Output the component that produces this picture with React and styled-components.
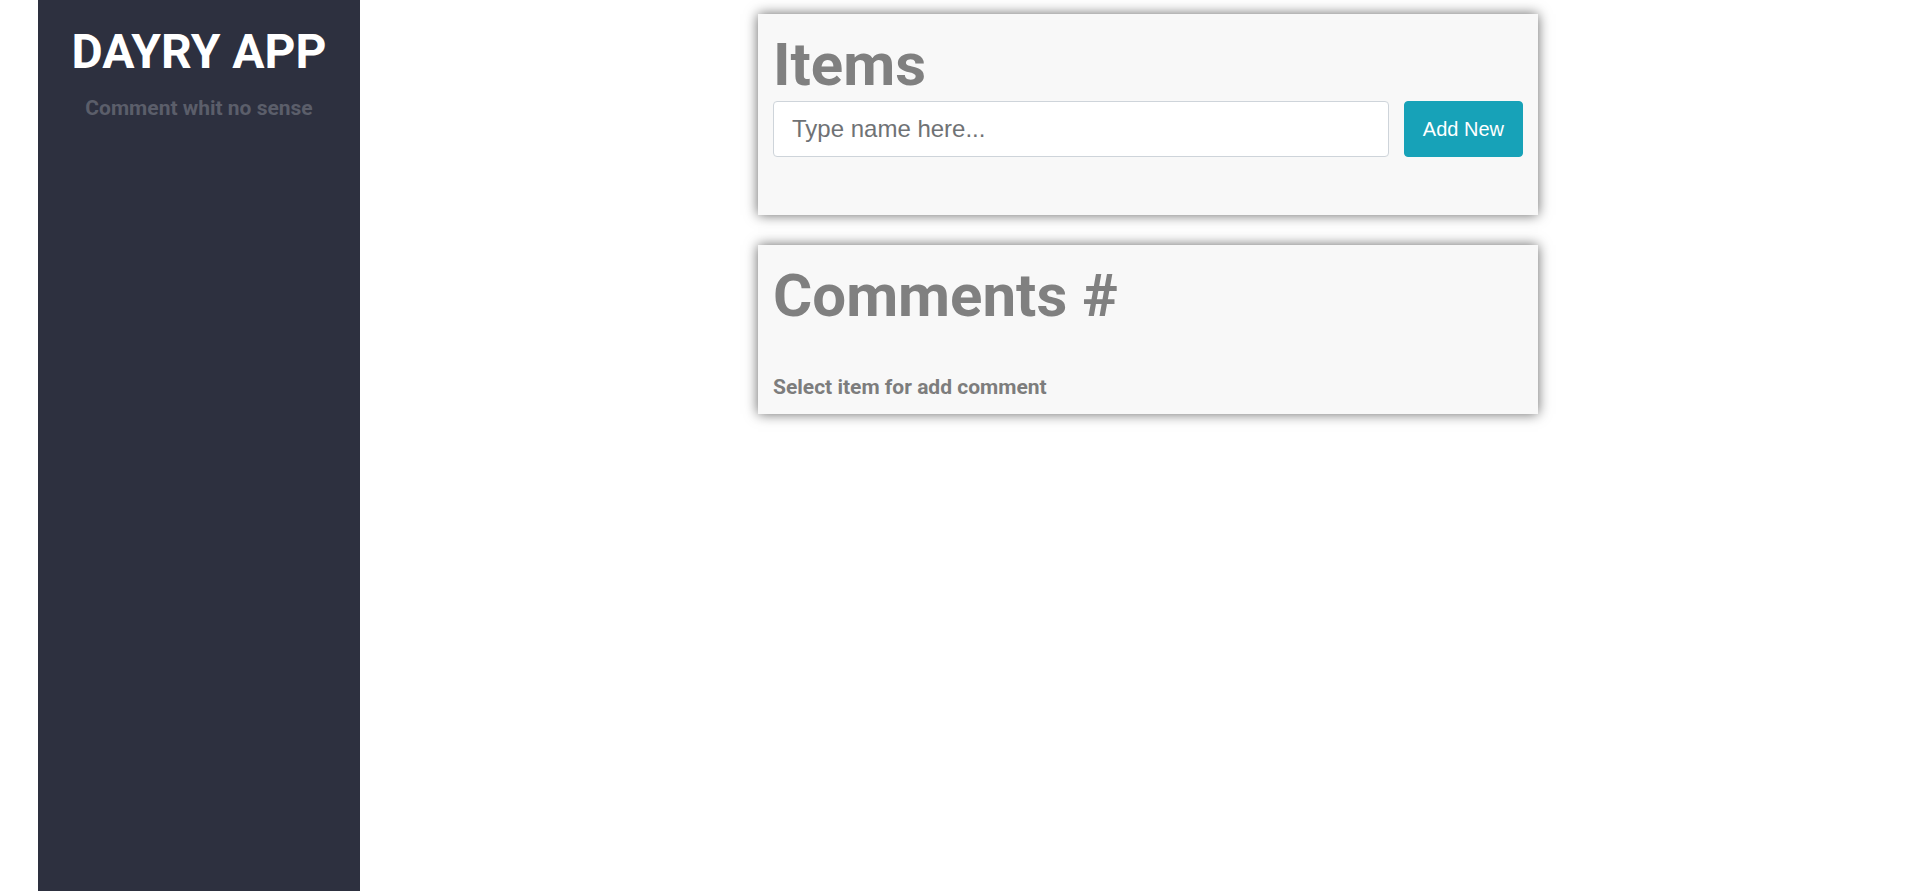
import React from "react";
import styled, { createGlobalStyle } from "styled-components";

const GlobalStyle = createGlobalStyle`
  html, body {
    margin: 0;
    padding: 0;
    background: #ffffff;
    font-family: Roboto, "Liberation Sans", Arial, sans-serif;
  }
  * { box-sizing: border-box; }
`;

const Layout = styled.div`
  display: flex;
  min-height: 891px;
  padding-left: 38px;
`;

const Sidebar = styled.aside`
  width: 322px;
  flex: 0 0 322px;
  background: #2d303f;
  padding-top: 23px;
  display: flex;
  flex-direction: column;
  align-items: center;
`;

const Brand = styled.h1`
  margin: 0;
  font-family: Roboto, sans-serif;
  font-weight: 700;
  font-size: 48px;
  line-height: 1.2;
  color: #ffffff;
`;

const Tagline = styled.p`
  margin: 15px 0 0;
  font-family: Roboto, sans-serif;
  font-weight: 700;
  font-size: 21px;
  line-height: 1.2;
  color: #5b5e6a;
`;

const Main = styled.main`
  flex: 1;
  padding: 14px 0 0 398px;
  display: flex;
  flex-direction: column;
  gap: 30px;
`;

const Card = styled.section`
  width: 780px;
  background: #f8f8f8;
  padding: 15px;
  box-shadow: 0 0 12px rgba(0, 0, 0, 0.6);
`;

const Heading = styled.h2`
  margin: 0;
  font-family: Roboto, sans-serif;
  font-weight: 700;
  font-size: 60px;
  line-height: 72px;
  color: #808080;
`;

const Form = styled.form`
  display: flex;
  gap: 15px;
  margin-bottom: 43px;
`;

const NameInput = styled.input`
  flex: 1;
  height: 56px;
  padding: 0 18px;
  border: 1px solid #ced4da;
  border-radius: 4px;
  background: #ffffff;
  font-family: "Liberation Sans", Arial, sans-serif;
  font-size: 24px;
  color: #495057;
  outline: none;
  &::placeholder {
    color: #6f7275;
  }
`;

const AddButton = styled.button`
  height: 56px;
  padding: 0 18px;
  border: 1px solid #17a2b8;
  border-radius: 4px;
  background: #17a2b8;
  color: #ffffff;
  font-family: "Liberation Sans", Arial, sans-serif;
  font-size: 20px;
  cursor: pointer;
`;

const Hint = styled.p`
  margin: 43px 0 0;
  font-family: Roboto, sans-serif;
  font-weight: 700;
  font-size: 21px;
  line-height: 24px;
  color: #7d7d7d;
`;

export default function App() {
  return (
    <>
      <GlobalStyle />
      <Layout>
        <Sidebar>
          <Brand>DAYRY APP</Brand>
          <Tagline>Comment whit no sense</Tagline>
        </Sidebar>
        <Main>
          <Card>
            <Heading>Items</Heading>
            <Form onSubmit={(e) => e.preventDefault()}>
              <NameInput type="text" placeholder="Type name here..." />
              <AddButton type="submit">Add New</AddButton>
            </Form>
          </Card>
          <Card>
            <Heading>Comments #</Heading>
            <Hint>Select item for add comment</Hint>
          </Card>
        </Main>
      </Layout>
    </>
  );
}
